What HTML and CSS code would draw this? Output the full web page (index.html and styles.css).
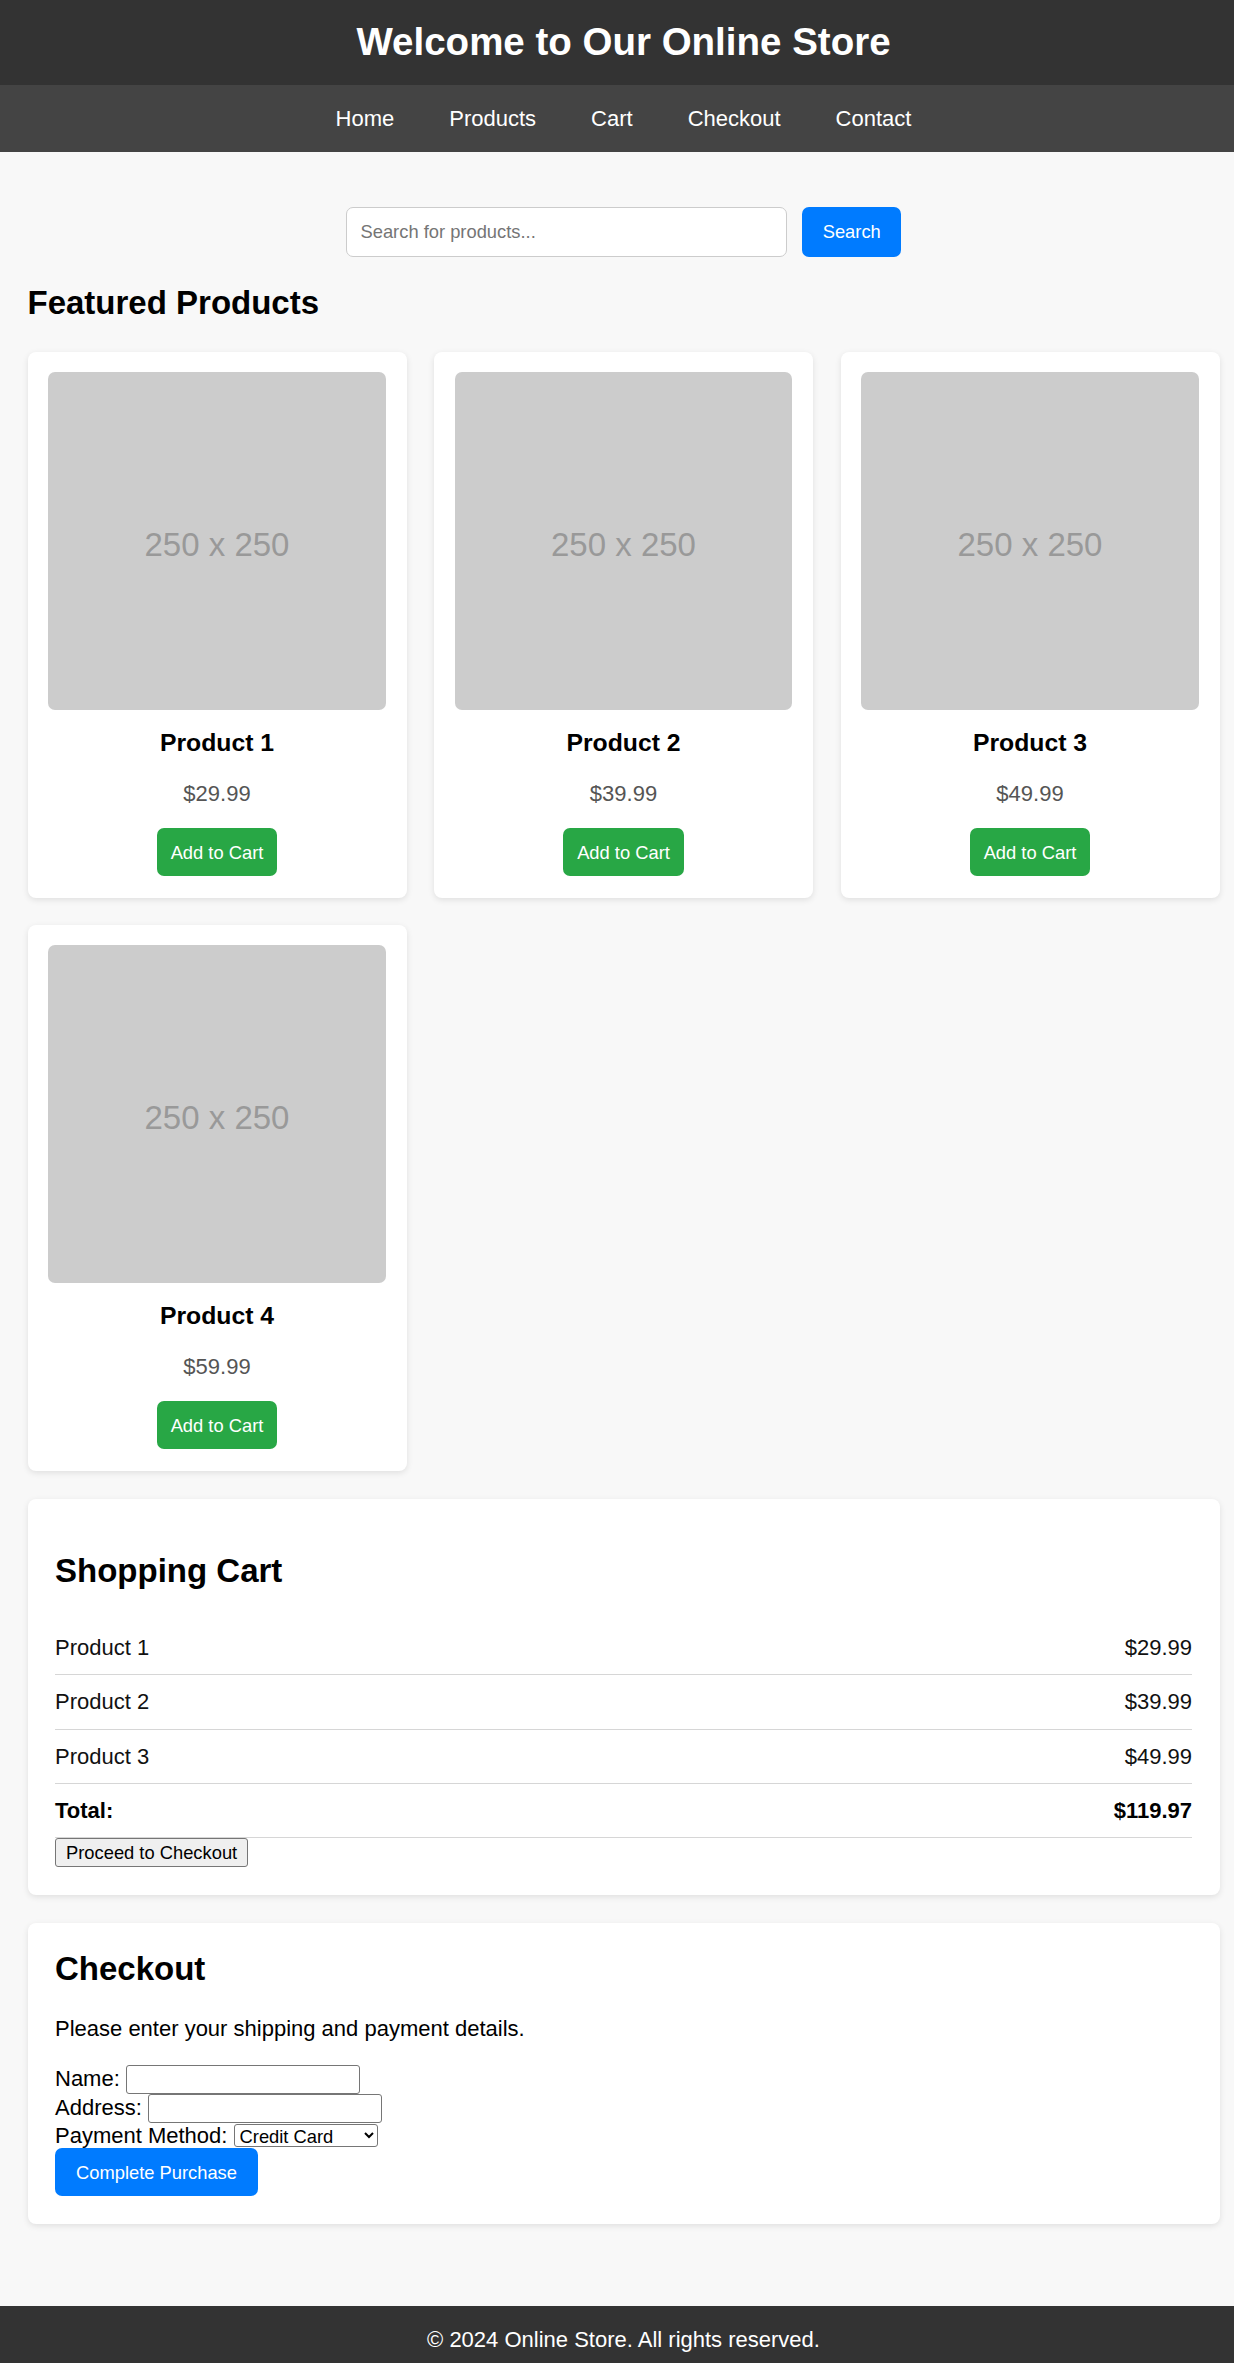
FILE: index.html
```html
<!DOCTYPE html>
<html lang="en">
<head>
<meta charset="utf-8">
<title>Online Store</title>
<link rel="stylesheet" href="styles.css">
</head>
<body>
<header class="site-header">
  <h1 class="site-title">Welcome to Our Online Store</h1>
</header>
<nav class="site-nav">
  <a href="#" class="nav-link">Home</a>
  <a href="#" class="nav-link">Products</a>
  <a href="#" class="nav-link">Cart</a>
  <a href="#" class="nav-link">Checkout</a>
  <a href="#" class="nav-link">Contact</a>
</nav>
<main class="main">
  <div class="search">
    <input type="text" class="search-input" placeholder="Search for products...">
    <button class="search-btn">Search</button>
  </div>
  <h2 class="section-title">Featured Products</h2>
  <div class="product-grid">
    <div class="card">
      <div class="thumb">250 x 250</div>
      <h3 class="card-title">Product 1</h3>
      <p class="card-price">$29.99</p>
      <button class="add-btn">Add to Cart</button>
    </div>
    <div class="card">
      <div class="thumb">250 x 250</div>
      <h3 class="card-title">Product 2</h3>
      <p class="card-price">$39.99</p>
      <button class="add-btn">Add to Cart</button>
    </div>
    <div class="card">
      <div class="thumb">250 x 250</div>
      <h3 class="card-title">Product 3</h3>
      <p class="card-price">$49.99</p>
      <button class="add-btn">Add to Cart</button>
    </div>
    <div class="card">
      <div class="thumb">250 x 250</div>
      <h3 class="card-title">Product 4</h3>
      <p class="card-price">$59.99</p>
      <button class="add-btn">Add to Cart</button>
    </div>
  </div>

  <section class="panel cart">
    <h2 class="panel-title cart-title">Shopping Cart</h2>
    <div class="cart-row"><span>Product 1</span><span>$29.99</span></div>
    <div class="cart-row"><span>Product 2</span><span>$39.99</span></div>
    <div class="cart-row"><span>Product 3</span><span>$49.99</span></div>
    <div class="cart-row total"><span>Total:</span><span>$119.97</span></div>
    <button class="plain-btn">Proceed to Checkout</button>
  </section>

  <section class="panel checkout">
    <h2 class="panel-title">Checkout</h2>
    <p class="checkout-text">Please enter your shipping and payment details.</p>
    <form class="checkout-form">
      <label>Name:</label> <input type="text" class="field"><br>
      <label>Address:</label> <input type="text" class="field"><br>
      <label>Payment Method:</label> <select class="pay-select"><option>Credit Card</option><option>PayPal</option></select><br>
      <button type="button" class="buy-btn">Complete Purchase</button>
    </form>
  </section>
</main>
<footer class="site-footer">
  <p class="footer-text">© 2024 Online Store. All rights reserved.</p>
</footer>
</body>
</html>
```

FILE: styles.css
```css
* { box-sizing: border-box; }
html, body { margin: 0; padding: 0; }
body {
  font-family: "Liberation Sans", Arial, Helvetica, sans-serif;
  background: #f8f8f8;
  color: #000;
  font-size: 22px;
}
.site-header {
  background: #333;
  color: #fff;
  padding: 20.4px 0 20.4px 13px;
  text-align: center;
}
.site-title {
  margin: 0;
  font-size: 38.5px;
  font-weight: bold;
  line-height: 44.2px;
}
.site-nav {
  background: #444;
  display: flex;
  justify-content: center;
  gap: 55px;
  padding: 20.8px 0 20.8px 13px;
}
.nav-link {
  color: #fff;
  text-decoration: none;
  font-size: 22px;
  line-height: 25.3px;
}
.main {
  padding: 27.5px 14.5px 82.6px 27.5px;
}
.search {
  display: flex;
  justify-content: center;
  align-items: center;
  gap: 15.5px;
  margin: 28px 0 26.7px;
}
.search-input {
  width: 441px;
  height: 49.5px;
  border: 1px solid #ccc;
  border-radius: 7px;
  padding: 0 13.75px;
  font-family: inherit;
  font-size: 18.33px;
  background: #fff;
  color: #000;
}
.search-input::placeholder { color: #757575; }
.search-btn {
  height: 49.5px;
  width: 99px;
  border: none;
  border-radius: 7px;
  background: #007bff;
  color: #fff;
  font-family: inherit;
  font-size: 18.33px;
  padding: 0;
}
.section-title {
  margin: 0 0 30px;
  font-size: 33px;
  line-height: 38px;
  font-weight: bold;
}
.product-grid {
  display: grid;
  grid-template-columns: repeat(3, 1fr);
  column-gap: 27.5px;
  row-gap: 27px;
}
.card {
  background: #fff;
  border-radius: 8px;
  box-shadow: 0 2px 6px rgba(0,0,0,0.1);
  padding: 20.6px 20.6px 21.3px;
  text-align: center;
}
.thumb {
  aspect-ratio: 1 / 1;
  width: 100%;
  background: #ccc;
  border-radius: 7px;
  display: flex;
  align-items: center;
  justify-content: center;
  padding-top: 8px;
  color: #999;
  font-size: 33px;
}
.card-title {
  margin: 19px 0 0;
  font-size: 24.75px;
  line-height: 28.4px;
  font-weight: bold;
}
.card-price {
  margin: 23.4px 0 0;
  font-size: 22px;
  line-height: 25.3px;
  color: #555;
}
.add-btn {
  margin-top: 21.8px;
  border: none;
  border-radius: 7px;
  background: #28a745;
  color: #fff;
  font-family: inherit;
  font-size: 18.33px;
  line-height: 21px;
  padding: 13.75px 13.75px;
}
.panel {
  background: #fff;
  border-radius: 8px;
  box-shadow: 0 2px 6px rgba(0,0,0,0.1);
  padding: 27.5px;
  margin-top: 28px;
}
.panel-title {
  margin: 0;
  font-size: 33px;
  line-height: 38px;
  font-weight: bold;
}
.cart-title {
  margin: 25.8px 0 31px;
}
.cart-row {
  display: flex;
  justify-content: space-between;
  padding: 14px 0;
  font-size: 22px;
  line-height: 25.3px;
  color: #111;
  border-bottom: 1px solid #d6d6d6;
}
.cart-row.total { font-weight: bold; color: #000; }
.plain-btn {
  font-family: inherit;
  font-size: 18.33px;
  line-height: 21px;
  padding: 3px 10px;
  background: #efefef;
  border: 1px solid #767676;
  border-radius: 3px;
  color: #000;
  display: block;
}
.checkout-text {
  margin: 27.5px 0 23.5px;
  font-size: 22px;
  line-height: 25.3px;
}
.checkout-form {
  margin: 0;
  font-size: 22px;
  line-height: 25.3px;
}
.field {
  width: 234px;
  height: 29px;
  border: 1px solid #767676;
  border-radius: 3px;
  padding: 3px 3px;
  font-family: inherit;
  font-size: 18.33px;
  background: #fff;
  vertical-align: baseline;
}
.pay-select {
  width: 144px;
  height: 23.5px;
  border: 1px solid #767676;
  border-radius: 3px;
  padding: 0 1px;
  font-family: inherit;
  font-size: 18.33px;
  background: #fff;
  color: #000;
}
.buy-btn {
  border: none;
  border-radius: 7px;
  background: #007bff;
  color: #fff;
  font-family: inherit;
  font-size: 18.33px;
  line-height: 21px;
  padding: 13.7px 21px;
}
.site-footer {
  background: #333;
  color: #fff;
  text-align: center;
  padding: 20.5px 0 12.2px 13px;
}
.footer-text {
  margin: 0;
  font-size: 22px;
  line-height: 25.3px;
}
```
